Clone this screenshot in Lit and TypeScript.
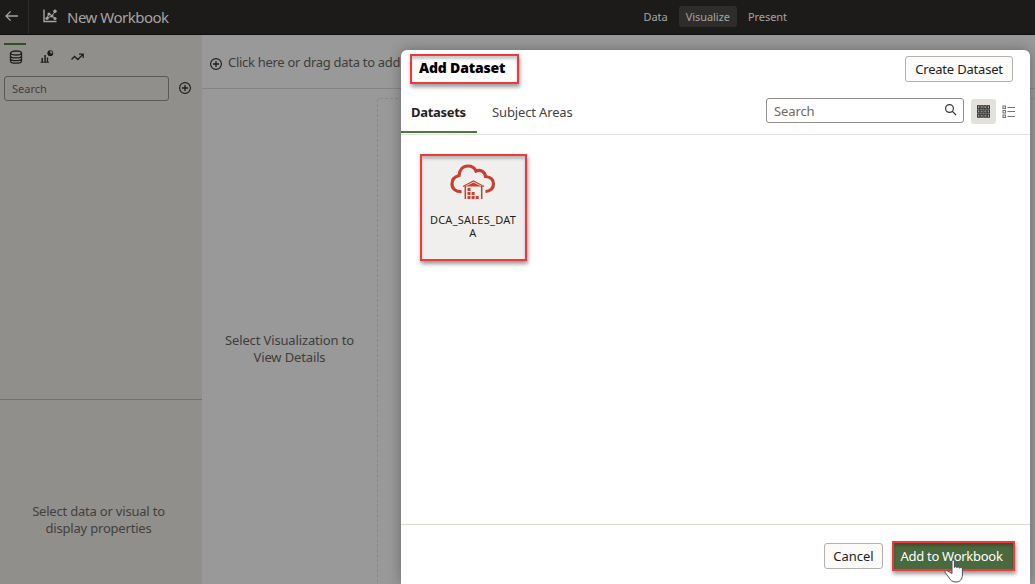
import { LitElement, html, css, svg } from "lit";
import { customElement } from "lit/decorators.js";

const plusCircle = html`<svg width="14" height="14" viewBox="0 0 14 14" fill="none" stroke="currentColor">
  <circle cx="7" cy="7" r="5.4" stroke-width="1.2" />
  <path d="M7 4v6M4 7h6" stroke-width="1.3" />
</svg>`;

@customElement("workbook-header")
export class WorkbookHeader extends LitElement {
  static styles = css`
    :host {
      display: grid;
      grid-template-columns: 29px 1fr auto;
      height: 34px;
      background: #1d1b19;
      border-bottom: 1px solid #0f0e0d;
      color: #a5a3a1;
    }
    .back {
      display: flex;
      align-items: center;
      padding-left: 5px;
      padding-bottom: 2px;
      border-right: 1px solid #2e2c2a;
      box-sizing: border-box;
    }
    .name {
      display: flex;
      align-items: center;
      padding-left: 14px;
      line-height: 34px;
    }
    .name svg {
      margin: 0 10px 2px 0;
    }
    .title {
      letter-spacing: -0.5px;
      font-size: 15px;
    }
    nav {
      display: flex;
      align-items: center;
      font-size: 11px;
      padding-right: 237px;
      padding-bottom: 1px;
    }
    .item {
      line-height: 22px;
      height: 21px;
      padding: 0 11px;
      letter-spacing: -0.05px;
    }
    .on {
      background: #2f2d2b;
      border-radius: 3px;
      padding: 0 7px;
    }
  `;
  render() {
    return html`
      <div class="back">
        <svg width="14" height="12" viewBox="0 0 14 12" fill="none" stroke="currentColor" stroke-width="1.3">
          <path d="M13 6H1.2M5.6 1.4L1 6l4.600 4.600" />
        </svg>
      </div>
      <div class="name">
        <svg width="14" height="14" viewBox="0 0 14 14" fill="none" stroke="currentColor">
          <path d="M1 0.500V12.500H13.500" stroke-width="1.400" />
          <path d="M4 9L6 4.500L9 7L12 2.500M4 9L9 7L12 9.500" stroke-width="1" />
          <g fill="currentColor" stroke="none">
            <circle cx="4" cy="9.300" r="1.600" /><circle cx="6" cy="5" r="1.600" /><circle cx="9" cy="7" r="1.500" />
            <circle cx="12" cy="2.300" r="1.700" /><circle cx="12" cy="9.500" r="1.600" />
          </g>
        </svg>
        <span class="title">New Workbook</span>
      </div>
      <nav>
        <span class="item">Data</span><span class="item on">Visualize</span><span class="item">Present</span>
      </nav>
    `;
  }
}

@customElement("data-panel")
export class DataPanel extends LitElement {
  static styles = css`
    :host {
      display: grid;
      grid-template-rows: 365px 1fr;
      background: #918f8c;
      color: #1f1e1c;
    }
    .top {
      border-bottom: 1px solid #747270;
    }
    .tabs {
      display: flex;
      padding: 8px 0 0 4px;
      height: 32px;
      box-sizing: border-box;
    }
    .tab {
      width: 22px;
      box-sizing: border-box;
      padding-left: 2px;
      margin-right: 9px;
      padding-top: 5px;
      border-top: 2px solid transparent;
      display: flex;
      justify-content: center;
      align-items: flex-start;
    }
    .on {
      border-color: #2e5226;
    }
    .find {
      display: flex;
      align-items: center;
      padding: 9px 0 0 4px;
      gap: 9px;
    }
    .find svg {
      margin-bottom: 2px;
    }
    .input {
      width: 165px;
      height: 25px;
      box-sizing: border-box;
      border: 1px solid #5b5957;
      border-radius: 3px;
      padding-left: 7px;
      font-size: 11px;
      line-height: 24px;
      color: #403e3c;
    }
    .hint {
      padding: 103px 5px 0 0;
      text-align: center;
      font-size: 13px;
      line-height: 16.5px;
      letter-spacing: -0.2px;
      color: #42403e;
    }
  `;
  render() {
    return html`
      <div class="top">
        <div class="tabs">
          <div class="tab on">
            <svg width="14" height="14" viewBox="0 0 14 14" fill="none" stroke="currentColor" stroke-width="1.300">
              <ellipse cx="7" cy="3" rx="5.500" ry="2" />
              <path d="M1.500 3v8c0 1.200 2.500 2.200 5.500 2.200s5.500-1 5.500-2.200V3M1.500 5.700c0 1.200 2.500 2.200 5.500 2.200s5.500-1 5.500-2.200M1.500 8.400c0 1.200 2.500 2.200 5.500 2.200s5.500-1 5.500-2.200" />
            </svg>
          </div>
          <div class="tab">
            <svg width="14" height="14" viewBox="0 0 14 14" fill="currentColor">
              <path d="M1.500 8h1.500v4h-1.500zM4.300 5h1.500v7h-1.500zM6.800 7.500h1.300v4.500h-1.300zM0.500 11.800h8.500v1h-8.500z" />
              <circle cx="10.300" cy="3.200" r="2.900" />
              <path d="M10.300 3.200V0.900a2.300 2.300 0 0 1 2.300 2.300z" fill="#918f8c" />
            </svg>
          </div>
          <div class="tab">
            <svg width="14" height="14" viewBox="0 0 14 14" fill="none" stroke="currentColor" stroke-width="1.300">
              <path d="M0.500 9.500L3.500 6.500l3.300 3L11.700 4.600M8 4.100h4.200v4" />
            </svg>
          </div>
        </div>
        <div class="find">
          <div class="input">Search</div>
          ${plusCircle}
        </div>
      </div>
      <div class="hint">Select data or visual to<br />display properties</div>
    `;
  }
}

@customElement("canvas-area")
export class CanvasArea extends LitElement {
  static styles = css`
    :host {
      display: grid;
      grid-template-rows: 54px 1fr;
      background: #999;
      color: #3f3d3b;
    }
    .drop {
      display: flex;
      align-items: center;
      gap: 5px;
      padding-left: 7px;
      border-bottom: 1px solid #858483;
      font-size: 13px;
      letter-spacing: -0.29px;
      white-space: nowrap;
    }
    .drop svg {
      color: #1f1e1c;
      margin-top: 4px;
      flex: none;
    }
    .body {
      display: grid;
      grid-template-columns: 175px 1fr;
    }
    .hint {
      padding-top: 243px;
      text-align: center;
      font-size: 13px;
      letter-spacing: -0.14px;
      line-height: 16.5px;
    }
    .sheet {
      margin: 9px 0 0 0;
      border: 1px dashed #8a8988;
      border-right: 0;
      border-bottom: 0;
      border-radius: 3px 0 0 0;
    }
  `;
  render() {
    return html`
      <div class="drop">${plusCircle}<span>Click here or drag data to add</span></div>
      <div class="body">
        <div class="hint">Select Visualization to<br />View Details</div>
        <div class="sheet"></div>
      </div>
    `;
  }
}

const gridCells = [0, 1, 2, 3].flatMap((c) => [0, 1, 2].map((r) => [c * 3.2, r * 4.2]));
const storeCells = [
  [17.5, 24], [17.5, 28], [21.6, 28], [17.5, 32], [21.6, 32], [25.7, 32],
];

@customElement("add-dataset-dialog")
export class AddDatasetDialog extends LitElement {
  static styles = css`
    :host {
      display: grid;
      grid-template-rows: 39px 46px 1fr 60px;
      background: #fff;
      border-radius: 6px 6px 0 0;
      box-shadow: 0 0 14px rgba(0, 0, 0, 0.3);
      color: #1f1e1c;
    }
    .head {
      display: flex;
      justify-content: space-between;
      align-items: flex-start;
      padding: 4px 17px 0 9px;
    }
    .mark {
      border: 2px solid #f0393b;
      box-sizing: border-box;
      box-shadow: 1px 3px 4px rgba(0, 0, 0, 0.4), inset 0 3px 3px rgba(0, 0, 0, 0.22);
    }
    .title {
      width: 109px;
      height: 30px;
      padding-left: 7px;
      font-size: 14px;
      font-weight: 900;
      letter-spacing: -0.18px;
      line-height: 24px;
      color: #000;
      white-space: nowrap;
    }
    .btn {
      box-sizing: border-box;
      height: 26px;
      border: 1px solid #b3b1ae;
      border-radius: 3px;
      background: #fcfbfa;
      font-size: 13px;
      line-height: 25px;
      text-align: center;
      white-space: nowrap;
    }
    .create {
      width: 108px;
      margin-top: 2px;
      letter-spacing: -0.2px;
    }
    .bar {
      display: flex;
      align-items: flex-start;
      border-bottom: 1px solid #e6e4e2;
      padding-right: 15px;
    }
    .tab {
      height: 45px;
      box-sizing: border-box;
      line-height: 46px;
      font-size: 13px;
      color: #45423f;
      letter-spacing: -0.14px;
      white-space: nowrap;
    }
    .on {
      width: 76px;
      padding-left: 10px;
      font-weight: 700;
      letter-spacing: -0.3px;
      color: #24211f;
      height: 44px;
      border-bottom: 2px solid #4d7a3d;
    }
    .areas {
      padding-left: 15px;
    }
    .search {
      display: flex;
      align-items: center;
      justify-content: space-between;
      box-sizing: border-box;
      width: 198px;
      height: 25px;
      margin: 9px 7px 0 auto;
      padding: 0 6px 0 7px;
      border: 1px solid #8f8c89;
      border-radius: 3px;
      font-size: 13px;
      letter-spacing: -0.1px;
      color: #6d6a67;
    }
    .search svg {
      margin-bottom: 2px;
    }
    .view {
      width: 25px;
      height: 25px;
      margin-top: 10px;
      display: flex;
      align-items: center;
      justify-content: center;
      border-radius: 3px;
      background: #e4e1dd;
    }
    .rows {
      width: 19px;
      background: none;
      justify-content: flex-end;
    }
    .list {
      padding: 19px 0 0 19px;
    }
    .tile {
      width: 107px;
      height: 107px;
      background: #f1efed;
      display: flex;
      flex-direction: column;
      align-items: center;
      padding: 8px 1px 0 0;
      font-size: 11px;
      line-height: 13px;
      letter-spacing: 0.25px;
      text-align: center;
    }
    .tile svg {
      margin-bottom: 13px;
    }
    .foot {
      display: flex;
      justify-content: flex-end;
      align-items: flex-start;
      gap: 9px;
      border-top: 1px solid #e0dad5;
      padding: 16px 15px 0 0;
    }
    .cancel {
      width: 59px;
      margin-top: 2px;
    }
    .add {
      position: relative;
      width: 123px;
      height: 30px;
      background: #4a693d;
      color: #fff;
      padding-right: 4px;
      text-align: center;
      font-size: 13px;
      letter-spacing: -0.27px;
      line-height: 27px;
      white-space: nowrap;
    }
    .pointer {
      position: absolute;
      left: 50px;
      top: 16px;
    }
  `;
  render() {
    return html`
      <div class="head">
        <div class="title mark">Add Dataset</div>
        <div class="btn create">Create Dataset</div>
      </div>
      <div class="bar">
        <div class="tab on">Datasets</div>
        <div class="tab areas">Subject Areas</div>
        <div class="search">
          <span>Search</span>
          <svg width="13" height="13" viewBox="0 0 13 13" fill="none" stroke="#35322f" stroke-width="1.200">
            <circle cx="5.500" cy="5.500" r="3.900" /><path d="M8.400 8.400L12 12" />
          </svg>
        </div>
        <div class="view">
          <svg width="13" height="13" viewBox="0 0 13 13" fill="#aaa" stroke="#1f1e1c" stroke-width="0.900">
            ${gridCells.map(([x, y]) => svg`<rect x=${x + 0.6} y=${y + 0.7} width="2.200" height="3.100" />`)}
          </svg>
        </div>
        <div class="view rows">
          <svg width="13" height="13" viewBox="0 0 13 13" fill="none" stroke="#777472" stroke-width="1.100">
            <path d="M1 1h2.500v2.500h-2.500zM1 5.500h2.500v2.500h-2.500zM1 10h2.500v2.500h-2.500zM5.500 2.500h7.500M5.500 6.500h7.500M5.500 11.500h7.500" />
          </svg>
        </div>
      </div>
      <div class="list">
        <div class="tile mark">
          <svg width="46" height="36" viewBox="0 0 46 36" fill="none" stroke="#c8402f">
            <path d="M11.500 27.500C5.500 28 2 24.500 2 20c0-4.500 3-7.500 7-8.500C9.500 5.500 13 2 18 2c3.500 0 6.500 1.700 8 5c4-2 9 .5 9.500 5.500c5 .5 8 3 8 7.500c0 4.500-3.500 7.500-8 7.500" stroke-width="3.200" />
            <path d="M13 22.500L23.500 17L34 22.500" stroke-width="1.200" />
            <path d="M15.500 22.500L23.500 18.500L31.500 22.500z" fill="#c8402f" stroke="none" />
            <path d="M15.300 22V35M31.700 22V35" stroke-width="1.500" />
            ${storeCells.map(([x, y]) => svg`<rect x=${x} y=${y} width="3" height="3" fill="#c8402f" stroke="none" />`)}
          </svg>
          <span>DCA_SALES_DAT<br />A</span>
        </div>
      </div>
      <div class="foot">
        <div class="btn cancel">Cancel</div>
        <div class="add mark">
          Add to Workbook
          <svg class="pointer" width="21" height="24" viewBox="0 0 21 24" fill="#fff" stroke="#4a4e58" stroke-width="1">
            <path d="M8 14.500V2.200C8 .6 10.400.6 10.400 2.200V8.500c0-1.200 2.500-1.100 2.500.3c0-1.200 2.600-1.100 2.600.4c0-1.200 2.900-1 2.900.8V16c0 4-2.200 7-6.400 7C8.500 23 6.500 21.500 4.500 18L1.200 13.500C.4 12 2.200 11 3.600 12L8 14.500z" />
          </svg>
        </div>
      </div>
    `;
  }
}

@customElement("app-root")
export class AppRoot extends LitElement {
  static styles = css`
    :host {
      display: grid;
      position: relative;
      grid-template-rows: 35px 1fr;
      width: 1035px;
      height: 584px;
      overflow: hidden;
      font-family: "Noto Sans", "Open Sans", sans-serif;
    }
    .work {
      display: grid;
      grid-template-columns: 202px 1fr;
    }
    .dialog {
      position: absolute;
      left: 401px;
      top: 50px;
      width: 629px;
      height: 534px;
    }
  `;
  render() {
    return html`
      <workbook-header></workbook-header>
      <div class="work">
        <data-panel></data-panel>
        <canvas-area></canvas-area>
      </div>
      <add-dataset-dialog class="dialog"></add-dataset-dialog>
    `;
  }
}
